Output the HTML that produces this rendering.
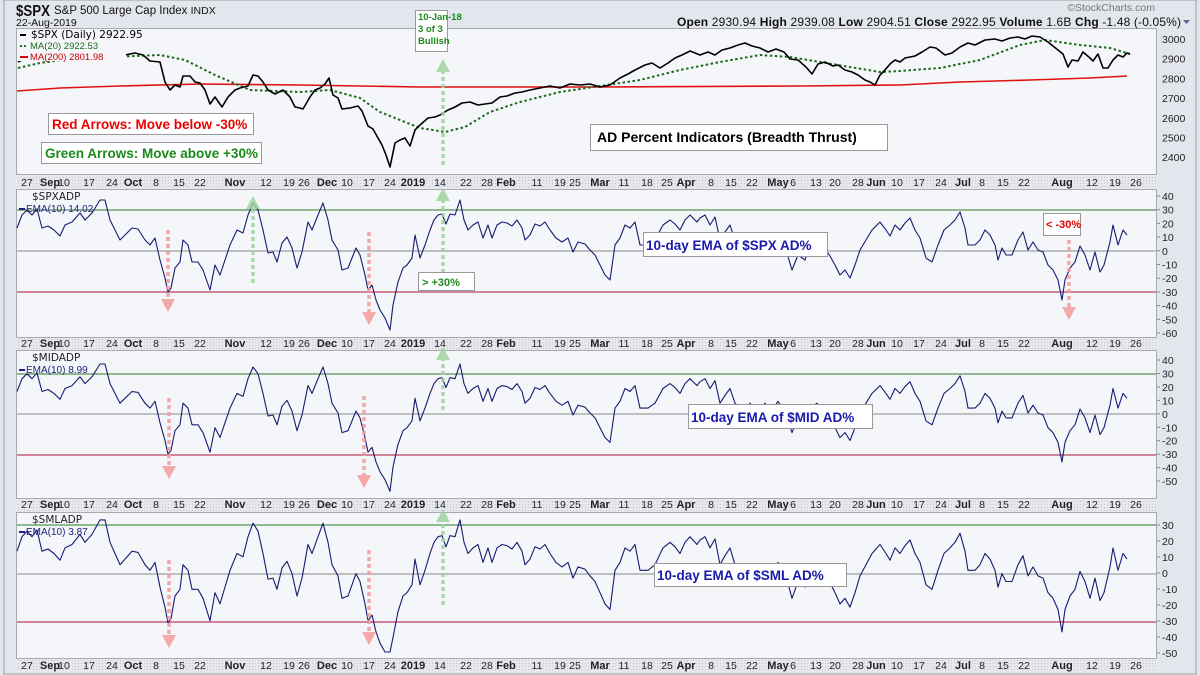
<!DOCTYPE html>
<html><head><meta charset="utf-8"><style>
html,body{margin:0;padding:0;background:#e3e6ed;}
svg{display:block;font-family:"Liberation Sans",sans-serif;}
</style></head><body>
<svg id="s" width="1200" height="675" viewBox="0 0 1200 675" xmlns="http://www.w3.org/2000/svg">
<defs>
<pattern id="dots" width="3" height="3" patternUnits="userSpaceOnUse"><rect width="3" height="3" fill="#e6e8ee"/><rect width="1" height="1" fill="#c4c7d0"/></pattern>
</defs>
<rect x="0" y="0" width="1200" height="675" fill="#e3e6ed"/>
<rect x="4" y="0" width="1192" height="674" fill="none" stroke="#9a9ca3"/>
<rect x="16" y="175" width="1141" height="14" fill="url(#dots)"/>
<rect x="16" y="337" width="1141" height="13" fill="url(#dots)"/>
<rect x="16" y="498" width="1141" height="14" fill="url(#dots)"/>
<rect x="16" y="658" width="1141" height="14" fill="url(#dots)"/>
<rect x="16.5" y="28.5" width="1140" height="146" fill="#f5f6fa" stroke="#a8aab0"/>
<rect x="16.5" y="189.5" width="1140" height="148" fill="#f5f6fa" stroke="#a8aab0"/>
<rect x="16.5" y="350.5" width="1140" height="148" fill="#f5f6fa" stroke="#a8aab0"/>
<rect x="16.5" y="512.5" width="1140" height="146" fill="#f5f6fa" stroke="#a8aab0"/>
<text x="16" y="16" font-size="16" font-weight="bold" fill="#111" textLength="34" lengthAdjust="spacingAndGlyphs">$SPX</text>
<text x="54" y="14" font-size="11.5" fill="#111">S&amp;P 500 Large Cap Index <tspan font-size="10.5">INDX</tspan></text>
<text x="16" y="26" font-size="10.5" fill="#111">22-Aug-2019</text>
<text x="1155" y="11" font-size="10.5" fill="#777" text-anchor="end">©StockCharts.com</text>
<text x="1181" y="26" font-size="12" fill="#111" text-anchor="end" textLength="504"><tspan font-weight="bold">Open</tspan> 2930.94 <tspan font-weight="bold">High</tspan> 2939.08 <tspan font-weight="bold">Low</tspan> 2904.51 <tspan font-weight="bold">Close</tspan> 2922.95 <tspan font-weight="bold">Volume</tspan> 1.6B <tspan font-weight="bold">Chg</tspan> -1.48 (-0.05%)</text>
<path d="M1183 20 l7 0 l-3.5 4z" fill="#5a6a9a"/>
<g id="grid"></g>
<g id="lines"></g>
<rect x="18" y="30" width="108" height="31" fill="#f5f6fa"/>
<line x1="20" y1="35" x2="26" y2="35" stroke="#000" stroke-width="2"/>
<text x="31" y="38" font-size="10.5" font-family="DejaVu Sans,sans-serif" fill="#000">$SPX (Daily) 2922.95</text>
<line x1="20" y1="46" x2="28" y2="46" stroke="#1a7a1a" stroke-width="2" stroke-dasharray="2,2"/>
<text x="30" y="49" font-size="9.5" fill="#1a6a1a">MA(20) 2922.53</text>
<line x1="20" y1="57" x2="28" y2="57" stroke="#d00" stroke-width="2"/>
<text x="30" y="60" font-size="9.5" fill="#c00">MA(200) 2801.98</text>
<text x="32" y="200" font-size="10.5" fill="#222" font-family="DejaVu Sans,sans-serif">$SPXADP</text>
<line x1="19" y1="209" x2="25" y2="209" stroke="#1a237e" stroke-width="2"/>
<text x="26" y="212" font-size="10" fill="#1a237e">EMA(10) 14.02</text>
<text x="32" y="361" font-size="10.5" fill="#222" font-family="DejaVu Sans,sans-serif">$MIDADP</text>
<line x1="19" y1="370" x2="25" y2="370" stroke="#1a237e" stroke-width="2"/>
<text x="26" y="373" font-size="10" fill="#1a237e">EMA(10) 8.99</text>
<text x="32" y="523" font-size="10.5" fill="#222" font-family="DejaVu Sans,sans-serif">$SMLADP</text>
<line x1="19" y1="532" x2="25" y2="532" stroke="#1a237e" stroke-width="2"/>
<text x="26" y="535" font-size="10" fill="#1a237e">EMA(10) 3.87</text>
<g font-weight="bold">
<rect x="48.5" y="113.5" width="205" height="21" fill="#fff" stroke="#999"/>
<text x="52" y="129" font-size="13.5" fill="#e00">Red Arrows: Move below -30%</text>
<rect x="41.5" y="142.5" width="220" height="21" fill="#fff" stroke="#999"/>
<text x="45" y="158" font-size="13.5" fill="#1a8a1a">Green Arrows: Move above +30%</text>
<rect x="415.5" y="10.5" width="32" height="41" fill="#fff" stroke="#999"/>
<text x="418" y="20" font-size="9.5" fill="#1a8a1a">10-Jan-18</text>
<text x="418" y="32" font-size="9.5" fill="#1a8a1a">3 of 3</text>
<text x="418" y="44" font-size="9.5" fill="#1a8a1a">Bullish</text>
<rect x="418.5" y="272.5" width="56" height="18" fill="#fff" stroke="#999"/>
<text x="422" y="286" font-size="11" fill="#1a8a1a">&gt; +30%</text>
<rect x="643.5" y="232.5" width="184" height="24" fill="#fff" stroke="#999"/>
<text x="646" y="250" font-size="13.5" fill="#1a1aaa">10-day EMA of $SPX AD%</text>
<rect x="1043.5" y="213.5" width="37" height="22" fill="#fff" stroke="#999"/>
<text x="1046" y="228" font-size="11" fill="#d00">&lt; -30%</text>
<rect x="688.5" y="404.5" width="184" height="24" fill="#fff" stroke="#999"/>
<text x="691" y="422" font-size="13.5" fill="#1a1aaa">10-day EMA of $MID AD%</text>
<rect x="654.5" y="563.5" width="192" height="23" fill="#fff" stroke="#999"/>
<text x="657" y="580" font-size="13.5" fill="#1a1aaa">10-day EMA of $SML AD%</text>
<rect x="590.5" y="124.5" width="297" height="26" fill="#fff" stroke="#999"/>
<text x="597" y="142" font-size="14" fill="#000">AD Percent Indicators (Breadth Thrust)</text>
</g>
<g id="labels" font-size="10.5" fill="#222"></g>
</svg>
<script>
var NS="http://www.w3.org/2000/svg",s=document.getElementById('s');
function el(p,t,a,txt){var e=document.createElementNS(NS,t);for(var k in a)e.setAttribute(k,a[k]);if(txt!=null)e.textContent=txt;p.appendChild(e);return e;}
var G=document.getElementById('grid'),L=document.getElementById('lines'),LB=document.getElementById('labels');
[[210,251,292],[374,414,455],[525,574,622]].forEach(function(a){
 el(G,'line',{x1:17,x2:1156,y1:a[0],y2:a[0],stroke:'#2a7a2a','stroke-width':1});
 el(G,'line',{x1:17,x2:1156,y1:a[1],y2:a[1],stroke:'#888','stroke-width':1});
 el(G,'line',{x1:17,x2:1156,y1:a[2],y2:a[2],stroke:'#b0103a','stroke-width':1});
});
function pl(pts,col,w,dash){var a={points:pts.map(function(p){return p[0]+','+p[1].toFixed(1)}).join(' '),fill:'none',stroke:col,'stroke-width':w,'stroke-linejoin':'round'};if(dash)a['stroke-dasharray']=dash;el(L,'polyline',a);}
var spx=[[18,62],[22,60],[30,52],[50,50],[70,55],[90,54],[105,52],[120,56],[135,53],[143,55],[150,61],[160,62],[165,82],[170,90],[175,85],[180,87],[183,76],[190,76],[195,82],[200,83],[205,90],[210,104],[215,97],[222,107],[228,97],[235,90],[240,88],[248,86],[253,75],[258,76],[263,82],[268,90],[275,94],[283,90],[290,97],[295,107],[300,108],[303,109],[310,97],[315,90],[320,88],[325,84],[329,78],[333,95],[338,98],[342,109],[350,108],[358,106],[362,111],[368,126],[373,129],[378,138],[382,145],[386,155],[390,167],[395,143],[400,140],[405,138],[410,146],[415,130],[420,125],[428,118],[435,117],[440,115],[448,110],[455,107],[462,103],[470,102],[478,105],[485,104],[492,103],[500,97],[507,96],[515,93],[522,92],[530,90],[540,88],[550,86],[560,88],[570,84],[580,85],[590,84],[600,87],[610,85],[620,78],[628,74],[635,70],[645,65],[652,63],[660,68],[668,63],[675,58],[682,55],[690,51],[700,55],[708,52],[715,55],[722,50],[730,48],[738,45],[745,43],[752,46],[760,48],[768,52],[776,49],[784,52],[790,59],[798,60],[806,67],[812,74],[818,64],[825,62],[833,66],[838,65],[845,70],[852,72],[858,75],[865,80],[870,82],[875,85],[880,75],[885,70],[890,64],[895,60],[900,62],[905,58],[915,56],[922,52],[930,47],[936,48],[945,55],[952,53],[960,47],[968,43],[975,45],[985,40],[995,39],[1002,41],[1010,38],[1018,37],[1025,39],[1032,36],[1040,37],[1048,42],[1058,50],[1063,54],[1068,67],[1072,60],[1078,61],[1083,52],[1090,58],[1093,61],[1098,54],[1103,68],[1108,68],[1113,60],[1118,55],[1123,57],[1127,53],[1130,54]];
var ma20=[[18,68],[40,63],[75,58],[110,57],[160,55],[185,60],[215,75],[250,90],[300,92],[330,90],[360,98],[380,112],[400,120],[420,128],[445,132],[465,127],[490,112],[520,102],[560,92],[600,86],[640,80],[680,70],[720,62],[760,55],[790,57],[820,62],[850,67],[880,72],[900,71],[940,68],[980,60],[1020,45],[1045,40],[1080,45],[1110,48],[1130,54]];
var ma200=[[17,91],[60,88],[120,86],[200,84],[300,85],[420,87],[600,87],[800,86],[900,85],[960,82],[1030,80],[1090,78],[1127,76]];
var adp=[[17,228],[22,215],[27,210],[32,215],[37,209],[42,228],[48,226],[54,230],[60,236],[65,225],[72,222],[80,213],[85,220],[92,213],[100,200],[105,200],[110,220],[115,230],[120,240],[126,234],[132,228],[138,229],[145,240],[150,245],[155,238],[160,260],[165,278],[168,292],[171,288],[175,268],[180,262],[183,240],[188,245],[192,262],[198,262],[203,270],[210,290],[215,265],[220,275],[225,260],[230,245],[237,230],[243,233],[248,215],[253,203],[258,210],[263,230],[268,253],[273,252],[277,262],[282,243],[287,237],[292,248],[297,268],[302,252],[308,222],[312,230],[318,215],[323,203],[328,220],[332,240],[338,250],[342,270],[348,268],[352,258],[356,248],[360,255],[365,275],[368,290],[372,285],[376,300],[380,310],[385,318],[390,330],[393,305],[398,282],[403,268],[407,265],[412,258],[415,235],[420,258],[425,245],[430,230],[434,220],[438,215],[442,214],[446,224],[450,214],[455,215],[460,200],[464,220],[468,230],[473,225],[478,222],[483,238],[488,225],[492,238],[497,225],[502,222],[507,223],[512,226],[517,220],[522,228],[525,240],[530,235],[535,224],[540,226],[545,222],[550,230],[556,238],[562,242],[568,238],[573,252],[578,242],[585,244],[590,250],[595,255],[600,265],[605,275],[610,280],[615,245],[620,238],[625,225],[630,228],[635,222],[640,245],[648,245],[655,240],[663,225],[670,220],[675,224],[680,230],[685,220],[690,215],[697,222],[700,218],[705,215],[710,225],[715,217],[720,240],[725,232],[730,225],[735,240],[740,245],[745,250],[750,240],[757,250],[765,240],[770,250],[778,238],[786,250],[792,270],[798,255],[805,260],[810,245],[817,240],[820,250],[826,250],[830,256],[835,265],[840,275],[845,270],[850,278],[855,265],[860,250],[866,240],[872,230],[880,222],[886,230],[890,236],[895,225],[900,230],[905,223],[910,218],[915,230],[920,238],[926,258],[932,262],[938,245],[944,230],[950,225],[955,220],[960,212],[965,228],[968,245],[975,245],[980,240],[985,230],[990,235],[995,245],[998,260],[1002,248],[1006,255],[1012,255],[1018,240],[1023,232],[1028,250],[1033,242],[1038,250],[1043,252],[1048,265],[1053,270],[1058,280],[1062,300],[1065,280],[1070,268],[1075,262],[1080,246],[1085,255],[1090,270],[1095,252],[1100,272],[1104,265],[1110,242],[1113,225],[1118,245],[1123,230],[1127,235]];
pl(ma200,'#e01010',1.6);
pl(ma20,'#1a6a1a',2,'2.5,2.5');
pl(spx,'#000',1.6);
pl(adp,'#1a1a70',1.1);
pl(adp.map(function(p){return [p[0],414+(p[1]-251)*0.98]}),'#1a1a70',1.1);
pl(adp.map(function(p){return [p[0],Math.min(652,574+(p[1]-251)*1.12+3)]}),'#1a1a70',1.1);
function arrow(x,y1,y2,col,down){el(L,'line',{x1:x,x2:x,y1:y1,y2:y2,stroke:col,'stroke-width':3.5,'stroke-dasharray':'4,3',opacity:0.85});
 var d=down?('M'+(x-7)+' '+y2+' L'+(x+7)+' '+y2+' L'+x+' '+(y2+13)+'Z'):('M'+(x-7)+' '+y2+' L'+(x+7)+' '+y2+' L'+x+' '+(y2-13)+'Z');
 el(L,'path',{d:d,fill:col,opacity:0.85});}
var R='#f29a9a',Gr='#9ed49e';
arrow(443,165,72,Gr,false);
arrow(168,230,299,R,true);arrow(369,232,312,R,true);arrow(1069,240,307,R,true);
arrow(253,283,209,Gr,false);arrow(443,280,201,Gr,false);
arrow(169,398,466,R,true);arrow(364,396,475,R,true);arrow(443,410,360,Gr,false);
arrow(169,560,635,R,true);arrow(369,550,632,R,true);arrow(443,605,522,Gr,false);
function yl(v0,y0,step,vals){vals.forEach(function(v){var y=y0+(v0-v)/10*step;el(LB,'text',{x:1162,y:y+4},String(v));el(LB,'line',{x1:1157,x2:1160,y1:y,y2:y,stroke:'#888'});});}
[3000,2900,2800,2700,2600,2500,2400].forEach(function(v,i){var y=39+i*19.7;el(LB,'text',{x:1162,y:y+4},String(v));});
yl(40,196,13.7,[40,30,20,10,0,-10,-20,-30,-40,-50,-60]);
yl(40,360,13.45,[40,30,20,10,0,-10,-20,-30,-40,-50]);
yl(30,525,16,[30,20,10,0,-10,-20,-30,-40,-50]);
var xs=[['27',27],['Sep',50,1],['10',64],['17',89],['24',112],['Oct',133,1],['8',156],['15',179],['22',200],['Nov',235,1],['12',266],['19',289],['26',304],['Dec',327,1],['10',347],['17',369],['24',390],['2019',413,1],['14',440],['22',466],['28',487],['Feb',506,1],['11',537],['19',560],['25',575],['Mar',600,1],['11',624],['18',647],['25',667],['Apr',686,1],['8',711],['15',731],['22',752],['May',778,1],['6',793],['13',816],['20',835],['28',858],['Jun',876,1],['10',897],['17',919],['24',941],['Jul',963,1],['8',982],['15',1003],['22',1024],['Aug',1062,1],['12',1092],['19',1115],['26',1136]];
[186,347,508,669].forEach(function(y){xs.forEach(function(a){var t=el(LB,'text',{x:a[1],y:y,'text-anchor':'middle'},a[0]);if(a[2]){t.setAttribute('font-weight','bold');t.setAttribute('font-size','11');}});});
</script>
</body></html>
